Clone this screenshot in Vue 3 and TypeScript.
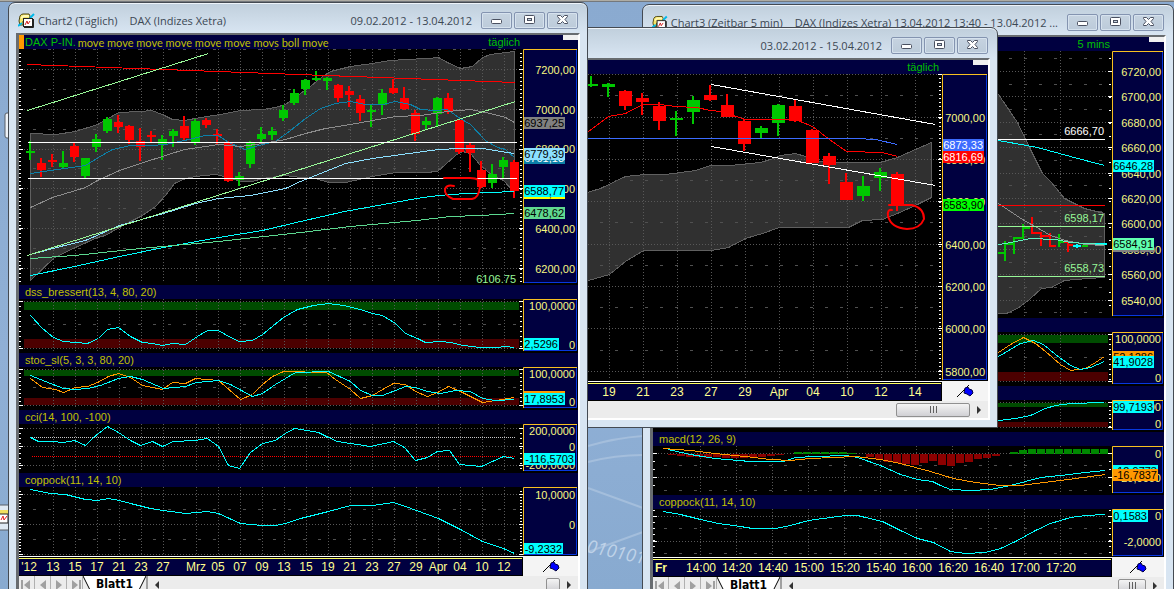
<script setup lang="ts">
type Point = [number, number]
// body top, body bottom, high, low, rising (1) or falling (0)
type Candle = [number, number, number, number, 0 | 1]

interface Line { color: string; pts: string }
interface Band { y: number; h: number; color: string }
interface Label { y: number; text: string }
interface Tag { y: number; text: string; bg: string; fg: string }
interface Note { x: number; y: number; text: string; color: string }
interface Rect { x: number; y: number; w: number; h: number; color: string }
interface Pane {
  title: string
  top: number
  height: number
  axisHeight: number
  dotted: number[]
  dashed: number[]
  tickStep: number
  bands?: Band[]
  area?: string
  lines: Line[]
  candles?: { x: number; step: number; width: number; data: Candle[] }
  rects?: Rect[]
  levels?: { y: number; color: string }[]
  notes?: Note[]
  scribble?: string
  labels: Label[]
  tags: Tag[]
}
interface Tick { x: number; text: string }
interface ChartWindow {
  id: string
  caption: string
  instrument: string
  period: string
  interval: string
  system: string
  studies: string
  left: number
  right: number
  axis: number
  gridStart: number
  gridEnd: number
  grid: number[]
  ticks: Tick[]
  panes: Pane[]
  sheet: string
}

const RED = '#ff0000'
const GREEN = '#00c800'
const CYAN = '#00ffff'
const ORANGE = '#ff9800'
const BAND_HI = '#004c00'
const BAND_LO = '#4c0000'
const PALE = '#98f898'

const ramp = (start: number, step: number, names: string[]): Tick[] =>
  names.map((text, i) => ({ x: start + i * step, text }))

const dailyTicks: Tick[] = [
  { x: 29, text: "'12" },
  ...ramp(53, 22, ['13', '15', '17', '21', '23', '27']),
  ...ramp(196, 22, ['Mrz', '05', '07', '09', '13', '15', '19', '21', '23', '27', '29', 'Apr', '04', '10', '12']),
]
const frontTicks = ramp(609, 34, ['19', '21', '23', '27', '29', 'Apr', '04', '10', '12', '14'])
const minuteTicks = ramp(701, 36, ['14:00', '14:20', '14:40', '15:00', '15:20', '15:40', '16:00', '16:20', '16:40', '17:00', '17:20'])

const histogram = (values: number[]): Rect[] =>
  values
    .map((v, k) => ({ x: 659 + 9 * k, y: v > 0 ? 454 - v : 454, w: 8, h: Math.abs(v), color: v > 0 ? '#008800' : '#8c0000' }))
    .filter((r) => r.h > 0)

const daily: ChartWindow = {
  id: 'daily',
  caption: 'Chart2 (Täglich)',
  instrument: 'DAX (Indizes Xetra)',
  period: '09.02.2012 - 13.04.2012',
  interval: 'täglich',
  system: 'DAX P-IN.',
  studies: 'move move move move move move movs boll move',
  left: 19, right: 578, axis: 523, gridStart: 24, gridEnd: 519,
  grid: dailyTicks.slice(1).map((t) => t.x),
  ticks: dailyTicks,
  sheet: 'Blatt1',
  panes: [
    {
      title: '', top: 49, height: 236, axisHeight: 234, tickStep: 4,
      dotted: [69, 109, 149, 188, 228, 268], dashed: [49, 89, 129, 168, 208, 248],
      area: '30,133 55,134 75,131 97,124 108,118 118,112 140,111 151,110 162,114 172,119 184,120 200,117 220,114 240,110 262,109 275,107 285,104 300,93 310,86 322,76 330,71 350,66 372,63 390,60 405,59 427,58 438,57 447,62 460,68 472,66 482,57 490,54 514,51 514,192 503,180 492,175 480,165 470,153 462,151 455,155 445,164 437,171 425,172 395,172 372,176 345,182 328,182 315,178 300,177 285,175 262,178 252,181 240,181 228,177 215,174 195,176 185,178 174,183 165,195 155,206 142,215 130,221 119,227 105,235 97,237 75,247 54,257 30,280',
      lines: [
        { color: '#0c80a8', pts: '30,173 50,170 85,165 98,157 112,149 130,145 150,145 165,144 184,140 205,135 218,135 228,142 245,149 262,144 275,141 290,130 305,118 320,108 335,103 350,101 365,104 382,104 395,101 410,104 420,109 435,110 447,109 458,117 470,124 485,140 497,147 505,149 514,157' },
        { color: '#8c8c8c', pts: '30,207 52,197 85,187 97,180 119,170 140,163 165,155 184,149 205,146 218,144 240,146 262,143 285,139 305,133 325,128 350,124 372,120 395,116 420,115 447,111 470,109 490,113 505,117 514,122' },
        { color: '#8ce0ff', pts: '30,254 60,246 85,240 119,225 163,213 195,203 218,198 250,195 285,188 300,181 325,171 345,163 372,158 394,155 416,152 438,149 460,148 482,148 500,151 514,153' },
        { color: CYAN, pts: '30,275 74,266 119,256 163,247 218,237 262,230 300,221 344,211 372,206 416,198 438,195 465,193 490,192 514,191' },
        { color: '#5cd890', pts: '30,258 74,255 140,248 218,241 300,232 350,226 416,220 450,216 480,215 514,213' },
        { color: RED, pts: '27,64 515,82' },
        { color: PALE, pts: '27,110 208,53' },
        { color: PALE, pts: '27,255 515,101' },
        { color: '#ffffff', pts: '27,142 516,142' },
        { color: '#ffffff', pts: '27,178 516,178' },
      ],
      candles: {
        x: 30, step: 11, width: 9,
        data: [
          [151, 153, 141, 160, 1], [163, 170, 158, 177, 0], [160, 162, 154, 167, 0], [163, 167, 151, 168, 1],
          [146, 157, 143, 162, 0], [158, 176, 158, 178, 1], [139, 147, 134, 152, 1], [119, 131, 117, 133, 1],
          [122, 127, 115, 133, 0], [126, 140, 125, 144, 0], [141, 147, 128, 161, 0], [135, 137, 131, 143, 0],
          [139, 145, 135, 160, 1], [131, 136, 129, 147, 1], [126, 138, 116, 141, 0], [121, 143, 119, 145, 1],
          [120, 125, 118, 128, 0], [134, 136, 129, 145, 0], [143, 181, 141, 182, 0], [176, 180, 172, 186, 1],
          [143, 164, 141, 168, 1], [134, 139, 127, 144, 1], [131, 135, 127, 140, 1], [110, 118, 105, 121, 1],
          [93, 103, 89, 105, 1], [80, 89, 79, 95, 1], [78, 80, 71, 81, 1], [78, 81, 77, 90, 1],
          [85, 98, 84, 102, 0], [91, 95, 86, 107, 0], [99, 113, 95, 121, 0], [110, 112, 105, 127, 1],
          [93, 105, 89, 115, 1], [88, 93, 79, 94, 0], [98, 109, 87, 110, 0], [113, 134, 110, 141, 0],
          [121, 125, 117, 129, 1], [98, 114, 97, 126, 1], [98, 112, 93, 114, 0], [120, 152, 119, 154, 0],
          [145, 153, 143, 172, 0], [170, 187, 161, 188, 0], [174, 183, 164, 188, 1], [160, 167, 157, 178, 1],
          [162, 191, 160, 198, 0],
        ],
      },
      notes: [{ x: 516, y: 283, text: '6106.75', color: PALE }],
      scribble: 'M444 178 H470 Q481 178 480 186 Q479 198 472 199 H453 Q444 195 445 189 Q447 184 454 186',
      labels: [
        { y: 70, text: '7200,00' }, { y: 110, text: '7000,00' }, { y: 149, text: '6800,00' },
        { y: 189, text: '6600,00' }, { y: 229, text: '6400,00' }, { y: 269, text: '6200,00' },
      ],
      tags: [
        { y: 123, text: '6937,25', bg: '#808080', fg: '#000' },
        { y: 158, text: '6761,13', bg: '#0c80a8', fg: '#fff' },
        { y: 154, text: '6779,39', bg: '#8ce0ff', fg: '#000' },
        { y: 193, text: '6583,90', bg: '#ffff00', fg: '#000' },
        { y: 191, text: '6588,77', bg: CYAN, fg: '#000' },
        { y: 213, text: '6478,62', bg: '#60d890', fg: '#000' },
      ],
    },
    {
      title: 'dss_bressert(13, 4, 80, 20)', top: 299, height: 54, axisHeight: 52, tickStep: 5,
      dotted: [301, 348], dashed: [324],
      bands: [{ y: 302, h: 8, color: BAND_HI }, { y: 339, h: 9, color: BAND_LO }],
      lines: [{ color: CYAN, pts: '30,315 42,328 53,337 63,341 75,342 87,343 98,338 107,329 118,327 130,336 142,342 152,343 162,345 172,343 185,344 197,336 207,330 218,330 230,337 239,341 252,340 262,334 283,317 297,309 313,305 328,303 343,305 360,309 372,313 382,315 395,323 405,333 417,338 425,342 440,341 450,342 463,345 480,347 497,347 504,346 514,347' }],
      labels: [{ y: 306, text: '100,0000' }, { y: 345, text: '0' }],
      tags: [{ y: 344, text: '2,5296', bg: CYAN, fg: '#000' }],
    },
    {
      title: 'stoc_sl(5, 3, 3, 80, 20)', top: 367, height: 43, axisHeight: 41, tickStep: 4,
      dotted: [369, 405], dashed: [387],
      bands: [{ y: 370, h: 6, color: BAND_HI }, { y: 398, h: 7, color: BAND_LO }],
      lines: [
        { color: ORANGE, pts: '30,378 42,387 55,389 63,392 75,387 87,386 97,382 108,376 118,373 130,377 142,385 162,389 172,382 185,383 195,378 218,380 240,399 252,394 262,384 272,376 283,371 326,372 335,379 350,389 360,398 372,395 382,389 393,383 405,384 415,391 427,396 437,392 448,386 460,391 482,402 495,400 514,397' },
        { color: CYAN, pts: '30,375 45,381 63,388 75,389 87,388 100,385 118,378 130,376 142,379 163,388 185,386 196,382 218,380 230,384 252,396 262,393 275,384 285,378 295,372 328,371 350,381 360,390 372,395 382,395 395,390 405,386 415,387 427,391 440,393 455,390 470,391 482,398 495,400 514,399' },
      ],
      labels: [{ y: 374, text: '100,0000' }, { y: 402, text: '0' }],
      tags: [
        { y: 397, text: '19,7861', bg: ORANGE, fg: '#000' },
        { y: 399, text: '17,8953', bg: CYAN, fg: '#000' },
      ],
    },
    {
      title: 'cci(14, 100, -100)', top: 424, height: 49, axisHeight: 47, tickStep: 5,
      dotted: [428, 446, 465], dashed: [],
      levels: [{ y: 437, color: '#c8c8c8' }, { y: 456, color: RED }],
      lines: [{ color: CYAN, pts: '30,437 38,441 52,441 63,442 74,440 85,445 93,437 107,426 118,432 130,440 140,445 152,441 162,446 173,441 195,440 207,438 218,446 228,465 239,468 250,452 262,443 275,440 285,433 294,428 307,430 318,432 328,437 337,441 350,443 370,446 393,441 404,447 415,460 427,457 437,451 449,450 459,464 481,466 492,461 503,456 514,458' }],
      labels: [{ y: 431, text: '200,0000' }, { y: 447, text: '0' }, { y: 465, text: '-200,0000' }],
      tags: [{ y: 459, text: '-116,5703', bg: CYAN, fg: '#000' }],
    },
    {
      title: 'coppock(11, 14, 10)', top: 487, height: 69, axisHeight: 68, tickStep: 3,
      dotted: [494, 524, 554], dashed: [509, 539],
      lines: [{ color: CYAN, pts: '30,489 50,493 65,494 85,499 97,500 108,498 119,500 130,503 150,508 163,510 185,513 207,511 218,513 240,523 262,525 275,525 285,523 300,518 328,511 350,505 372,505 393,502 405,506 416,510 438,518 460,529 482,541 503,548 514,553' }],
      labels: [{ y: 495, text: '10,0000' }, { y: 525, text: '0' }],
      tags: [{ y: 549, text: '-9,2332', bg: CYAN, fg: '#000' }],
    },
  ],
}

const minutes: ChartWindow = {
  id: 'minutes',
  caption: 'Chart3 (Zeitbar 5 min)',
  instrument: 'DAX (Indizes Xetra) 13.04.2012 13:40 - 13.04.2012 ...',
  period: '',
  interval: '5 mins',
  system: '',
  studies: '',
  left: 653, right: 1164, axis: 1112, gridStart: 655, gridEnd: 1108,
  grid: minuteTicks.map((t) => t.x - 1),
  ticks: minuteTicks,
  sheet: 'Blatt1',
  panes: [
    {
      title: '', top: 51, height: 267, axisHeight: 265, tickStep: 13,
      dotted: [71, 96, 122, 147, 173, 198, 223, 249, 274, 300], dashed: [58, 84, 109, 134, 160, 185, 211, 236, 262, 287, 312],
      area: '960,60 998,94 1017,122 1029,147 1042,173 1051,182 1064,198 1084,208 1104,213 1104,277 1087,278 1064,280 1051,287 1041,288 1029,299 1017,308 1006,313 998,313 960,300',
      lines: [
        { color: '#8c8c8c', pts: '990,198 998,203 1022,219 1040,229 1050,235 1065,240 1085,244 1104,245' },
        { color: CYAN, pts: '990,138 998,140 1037,147 1070,156 1104,165' },
        { color: '#ffffff', pts: '990,139 1104,139' },
        { color: RED, pts: '990,205 1104,205' },
        { color: PALE, pts: '990,226 1104,226' },
        { color: PALE, pts: '990,276 1104,276' },
        { color: '#60f0c0', pts: '990,245 1005,243 1020,240 1030,238 1055,239 1070,242 1104,244' },
      ],
      rects: [
        { x: 998, y: 252, w: 6, h: 2, color: GREEN }, { x: 1004, y: 241, w: 2, h: 20, color: GREEN },
        { x: 1006, y: 243, w: 8, h: 2, color: GREEN }, { x: 1013, y: 237, w: 2, h: 17, color: GREEN },
        { x: 1014, y: 237, w: 9, h: 2, color: GREEN }, { x: 1022, y: 224, w: 2, h: 15, color: GREEN },
        { x: 1023, y: 227, w: 7, h: 2, color: GREEN }, { x: 1031, y: 217, w: 2, h: 17, color: RED },
        { x: 1031, y: 232, w: 9, h: 2, color: RED }, { x: 1040, y: 232, w: 2, h: 14, color: RED },
        { x: 1041, y: 235, w: 9, h: 2, color: RED }, { x: 1049, y: 233, w: 2, h: 14, color: RED },
        { x: 1050, y: 245, w: 6, h: 2, color: RED }, { x: 1058, y: 234, w: 2, h: 13, color: GREEN },
        { x: 1059, y: 241, w: 5, h: 2, color: GREEN }, { x: 1064, y: 241, w: 4, h: 2, color: RED },
        { x: 1067, y: 242, w: 2, h: 10, color: RED }, { x: 1069, y: 244, w: 4, h: 2, color: RED },
        { x: 1073, y: 245, w: 8, h: 2, color: CYAN }, { x: 1076, y: 244, w: 2, h: 4, color: CYAN },
        { x: 1082, y: 245, w: 6, h: 2, color: GREEN }, { x: 1091, y: 243, w: 16, h: 2, color: CYAN },
      ],
      notes: [
        { x: 1104, y: 135, text: '6666,70', color: '#fff' },
        { x: 1104, y: 222, text: '6598,17', color: PALE },
        { x: 1104, y: 272, text: '6558,73', color: PALE },
      ],
      labels: [
        { y: 72, text: '6720,00' }, { y: 97, text: '6700,00' }, { y: 123, text: '6680,00' }, { y: 148, text: '6660,00' },
        { y: 174, text: '6640,00' }, { y: 199, text: '6620,00' }, { y: 224, text: '6600,00' }, { y: 250, text: '6580,00' },
        { y: 275, text: '6560,00' }, { y: 301, text: '6540,00' },
      ],
      tags: [
        { y: 166, text: '6646,28', bg: CYAN, fg: '#000' },
        { y: 246, text: '6583,14', bg: '#808080', fg: '#000' },
        { y: 244, text: '6584,91', bg: '#60ffb0', fg: '#000' },
      ],
    },
    {
      title: '', top: 332, height: 54, axisHeight: 52, tickStep: 5,
      dotted: [334, 381], dashed: [357],
      bands: [{ y: 335, h: 8, color: BAND_HI }, { y: 372, h: 9, color: BAND_LO }],
      lines: [
        { color: ORANGE, pts: '998,352 1010,344 1023,337 1035,343 1045,351 1060,364 1070,370 1085,368 1095,362 1104,356' },
        { color: CYAN, pts: '998,356 1010,349 1020,343 1033,340 1043,344 1055,354 1070,365 1080,369 1090,367 1104,361' },
      ],
      labels: [{ y: 339, text: '100,0000' }, { y: 378, text: '0' }],
      tags: [
        { y: 357, text: '52,1286', bg: ORANGE, fg: '#000' },
        { y: 362, text: '41,9028', bg: CYAN, fg: '#000' },
      ],
    },
    {
      title: '', top: 400, height: 32, axisHeight: 30, tickStep: 4,
      dotted: [402, 427], dashed: [],
      bands: [{ y: 403, h: 4, color: BAND_HI }, { y: 422, h: 5, color: BAND_LO }],
      lines: [{ color: CYAN, pts: '998,420 1015,418 1030,415 1045,408 1055,405 1070,403 1104,402' }],
      labels: [{ y: 407, text: '100,0000' }, { y: 424, text: '0' }],
      tags: [{ y: 407, text: '99,7193', bg: CYAN, fg: '#000' }],
    },
    {
      title: 'macd(12, 26, 9)', top: 446, height: 49, axisHeight: 47, tickStep: 8,
      dotted: [453, 477], dashed: [465, 490],
      rects: histogram([0, -1, -2, -3, -3, -4, -3, -4, -4, -4, -3, -3, -2, -1, 0, 2, 2, 2, 2, 2, 2, 1, 0, -3, -5, -8, -9, -10, -11, -9, -7, -11, -12, -9, -8, -5, -4, -2, 0, 2, 4, 5, 5, 5, 5, 5, 5, 5, 5, 5]),
      lines: [
        { color: CYAN, pts: '668,449 672,450 690,454 714,458 750,461 783,461 795,457 815,456 845,455 857,457 880,465 900,474 917,479 932,481 940,485 950,489 970,490 990,489 1010,485 1025,481 1040,477 1060,475 1085,472 1105,470' },
        { color: ORANGE, pts: '663,448 690,450 714,453 745,456 770,459 790,460 810,458 855,456 880,459 900,463 930,471 953,478 975,482 1000,485 1020,485 1060,480 1105,474' },
      ],
      labels: [{ y: 454, text: '0' }, { y: 478, text: '-20,0000' }],
      tags: [
        { y: 471, text: '-12,9773', bg: CYAN, fg: '#000' },
        { y: 475, text: '-16,7837', bg: ORANGE, fg: '#000' },
      ],
    },
    {
      title: 'coppock(11, 14, 10)', top: 509, height: 48, axisHeight: 47, tickStep: 6,
      dotted: [516, 541], dashed: [528, 553],
      lines: [{ color: CYAN, pts: '663,511 680,514 700,519 718,523 740,526 752,528 775,528 790,525 808,520 830,517 845,515 857,515 865,517 882,521 900,530 917,538 933,542 950,551 965,553 985,552 1000,548 1015,541 1035,530 1050,523 1070,517 1085,515 1105,514' }],
      labels: [{ y: 516, text: '0' }, { y: 542, text: '-2,0000' }],
      tags: [{ y: 516, text: '0,1583', bg: CYAN, fg: '#000' }],
    },
  ],
}

const front: ChartWindow = {
  id: 'front',
  caption: '',
  instrument: '',
  period: '03.02.2012 - 15.04.2012',
  interval: 'täglich',
  system: '',
  studies: '',
  left: 571, right: 988, axis: 942, gridStart: 576, gridEnd: 939,
  grid: frontTicks.map((t) => t.x),
  ticks: frontTicks,
  sheet: '',
  panes: [
    {
      title: '', top: 74, height: 307, axisHeight: 306, tickStep: 4,
      dotted: [74, 117, 159, 201, 244, 286, 328, 371], dashed: [95, 138, 180, 222, 265, 307, 350],
      area: '580,194 600,188 625,176 645,174 665,174 695,170 710,165 730,165 760,162 770,159 780,155 795,153 805,156 813,160 830,162 880,162 897,157 915,149 931,142 931,197 917,204 897,213 882,219 862,220 848,227 779,227 762,233 745,238 728,247 711,250 643,250 625,261 609,274 588,280 580,282',
      lines: [
        { color: RED, pts: '580,136 588,131 608,116 625,113 642,104 660,104 675,106 696,107 710,110 720,111 745,119 795,119 812,126 829,139 846,151 882,152 897,156' },
        { color: '#3c6cff', pts: '580,138 855,138 875,139 897,144' },
        { color: '#ffffff', pts: '711,84 935,124' },
        { color: '#ffffff', pts: '711,146 935,185' },
      ],
      candles: {
        x: 591, step: 17, width: 13,
        data: [
          [84, 86, 76, 87, 1], [84, 87, 83, 97, 1], [91, 106, 90, 110, 0], [98, 102, 93, 115, 0],
          [106, 121, 102, 130, 0], [118, 120, 111, 136, 1], [100, 112, 96, 124, 1], [95, 100, 85, 101, 0],
          [105, 117, 94, 117, 0], [121, 144, 119, 151, 0], [128, 133, 126, 138, 1], [105, 123, 104, 136, 1],
          [106, 121, 100, 122, 0], [130, 163, 129, 163, 0], [156, 165, 153, 184, 0], [182, 200, 173, 200, 0],
          [186, 196, 176, 201, 1], [172, 178, 168, 191, 1], [174, 205, 172, 211, 0],
        ],
      },
      scribble: 'M889 205 H912 Q924 208 924 219 Q920 229 907 229 Q891 228 888 216 Q887 209 892 210',
      labels: [
        { y: 118, text: '7000,00' }, { y: 160, text: '6800,00' }, { y: 202, text: '6600,00' }, { y: 245, text: '6400,00' },
        { y: 287, text: '6200,00' }, { y: 329, text: '6000,00' }, { y: 372, text: '5800,00' },
      ],
      tags: [
        { y: 145, text: '6873,33', bg: '#3c6cff', fg: '#fff' },
        { y: 157, text: '6816,69', bg: RED, fg: '#fff' },
        { y: 205, text: '6583,90', bg: '#00ff00', fg: '#000' },
      ],
    },
  ],
}

const windows: ChartWindow[] = [minutes, front, daily]

const tickYs = (p: Pane): number[] => {
  const out: number[] = []
  for (let y = p.dotted[0] % p.tickStep + Math.ceil(p.top / p.tickStep) * p.tickStep; y < p.top + p.axisHeight; y += p.tickStep) out.push(y)
  return out
}

const tagWidth = (text: string): number =>
  [...text].reduce((sum, c) => sum + (c === ',' ? 3 : c === '-' ? 4 : 6), 2)

const points = (s: string): Point[] => s.split(' ').map((p) => p.split(',').map(Number) as Point)
const shifted = (s: string): string => points(s).map(([x, y]) => `${x + 0.5},${y + 0.5}`).join(' ')
</script>

<template>
  <main class="desktop">
    <svg class="wallpaper" width="1174" height="589" aria-hidden="true">
      <g fill="none" stroke="#a4bedc" stroke-width="2">
        <path d="M588 446 Q615 438 643 436" />
        <path d="M588 462 Q615 455 643 455" />
        <path d="M588 488 L643 508" />
        <path d="M588 552 L643 532" />
      </g>
      <text class="digits" x="586" y="552" transform="rotate(12 586 552)">010101</text>
      <rect x="0" y="0" width="1174" height="1" fill="#aeaca4" />
      <rect x="0" y="1" width="1174" height="1" fill="#74787c" />
      <rect x="5" y="113" width="8" height="25" rx="2" fill="#eef3f8" stroke="#5a6068" />
      <rect x="-3" y="505" width="14" height="25" fill="#dfe9f3" stroke="#5a6068" />
      <rect x="0" y="510" width="8" height="5" fill="#f0e060" />
      <rect x="-1" y="514" width="9" height="9" fill="#fff" stroke="#222" />
      <path d="M1 520 L3 516 L4 520 L7 516" fill="none" stroke="#e02020" />
    </svg>

    <section v-for="w in windows" :key="w.id" class="window" :class="w.id" :aria-label="w.caption || w.period">
      <header class="titlebar">
        <svg v-if="w.caption" class="app-icon" width="17" height="15" viewBox="0 0 17 15" aria-hidden="true">
          <path d="M1 8 L2 3 Q3 1 5 1 H11 L12 3 L11 8 H5 V12 H2 Z" fill="#f4e468" stroke="#4c4410" />
          <path d="M3 5 L6 3 L11 3" fill="none" stroke="#fff8b8" stroke-width="2" />
          <path d="M0 13 L4 10 M12 5 L16 1" stroke="#00b8e8" stroke-width="2" />
          <rect x="5.500" y="5.500" width="9" height="8" fill="#fff" stroke="#222" />
          <path d="M15.500 6 V14.500 H6" fill="none" stroke="#222" />
          <path d="M7 12 L9 8 L10 11 L12 8" fill="none" stroke="#d02020" />
        </svg>
        <h2 v-if="w.caption" class="caption">{{ w.caption }}</h2>
        <span class="instrument">{{ w.instrument }}</span>
        <span class="period">{{ w.period }}</span>
        <div class="controls">
          <button type="button" aria-label="Minimieren">
            <svg width="12" height="10" viewBox="0 0 12 10"><rect x="0.500" y="4.500" width="10" height="4" rx="1" fill="#fff" stroke="#4a5060" /></svg>
          </button>
          <button type="button" aria-label="Maximieren">
            <svg width="12" height="10" viewBox="0 0 12 10"><rect x="0.500" y="0.500" width="10" height="8" rx="1" fill="#fff" stroke="#4a5060" /><rect x="3.500" y="3.500" width="4" height="2" fill="#c8d4e0" stroke="#4a5060" /></svg>
          </button>
          <button type="button" aria-label="Schließen">
            <svg width="12" height="10" viewBox="0 0 12 10"><path d="M0.500 0.500 H3.500 L5.500 2.500 L7.500 0.500 H10.500 V1.500 L8 4.500 L10.500 7.500 V8.500 H7.500 L5.500 6.500 L3.500 8.500 H0.500 V7.500 L3 4.500 L0.500 1.500 Z" fill="#fff" stroke="#4a5060" /></svg>
          </button>
        </div>
      </header>

      <div class="body">
        <article v-for="(p, i) in w.panes" :key="p.top" class="pane">
          <div class="strip">
            <template v-if="i === 0">
              <i v-if="w.system" class="marker"></i>
              <span class="system">{{ w.system }}</span>
              <span class="studies">{{ w.studies }}</span>
              <span class="interval">{{ w.interval }}</span>
              <i class="handle"></i>
            </template>
            <span v-else class="study">{{ p.title }}</span>
          </div>
          <div class="row">
            <svg :width="w.axis - w.left" :height="p.height" :viewBox="`${w.left} ${p.top} ${w.axis - w.left} ${p.height}`" class="plot">
              <polygon v-if="p.area" :points="shifted(p.area)" fill="#303030" stroke="#606060" />
              <rect v-for="b in p.bands" :key="b.y" :x="w.gridStart" :y="b.y" :width="w.gridEnd - w.gridStart" :height="b.h" :fill="b.color" />
              <g stroke="#585858" stroke-dasharray="1 2">
                <line v-for="x in w.grid" :key="x" :x1="x + 0.5" :x2="x + 0.5" :y1="p.top" :y2="p.top + p.axisHeight" />
                <line v-for="y in p.dotted" :key="y" :x1="w.gridStart" :x2="w.gridEnd" :y1="y + 0.5" :y2="y + 0.5" />
              </g>
              <g stroke="#505050" stroke-dasharray="3 12">
                <line v-for="y in p.dashed" :key="y" :x1="w.gridStart + 9" :x2="w.gridEnd" :y1="y + 0.5" :y2="y + 0.5" />
              </g>
              <line v-for="l in p.levels" :key="l.y" :x1="w.left + 13" :x2="w.gridEnd - 3" :y1="l.y + 0.5" :y2="l.y + 0.5" :stroke="l.color" stroke-dasharray="1 1" />
              <rect v-for="(r, k) in p.rects" :key="k" :x="r.x" :y="r.y" :width="r.w" :height="r.h" :fill="r.color" />
              <g v-if="p.candles">
                <g v-for="(c, k) in p.candles.data" :key="k" :fill="c[4] ? GREEN : RED">
                  <rect :x="p.candles.x + k * p.candles.step - 1" :y="c[2]" width="2" :height="c[3] - c[2]" />
                  <rect :x="p.candles.x + k * p.candles.step - (p.candles.width - 1) / 2" :y="c[0]" :width="p.candles.width" :height="c[1] - c[0]" />
                </g>
              </g>
              <polyline v-for="(l, k) in p.lines" :key="k" :points="shifted(l.pts)" :stroke="l.color" fill="none" />
              <path v-if="p.scribble" :d="p.scribble" class="scribble" />
              <g fill="#ffffff">
                <rect v-for="y in tickYs(p)" :key="y" :x="w.axis - 3" :y="y" width="2" height="1" />
                <rect v-for="y in p.dotted" :key="y" :x="w.axis - 4" :y="y" width="4" height="1" />
                <rect v-for="y in tickYs(p)" :key="y" :x="w.left" :y="y" width="2" height="1" />
                <rect v-for="y in p.dotted" :key="y" :x="w.left" :y="y" width="4" height="1" />
              </g>
              <text v-for="n in p.notes" :key="n.text" :x="n.x" :y="n.y" class="number" :fill="n.color">{{ n.text }}</text>
            </svg>
            <svg :width="w.right - w.axis" :height="p.height" :viewBox="`${w.axis} ${p.top} ${w.right - w.axis} ${p.height}`" class="scale">
              <rect :x="w.axis" :y="p.top" :width="w.right - w.axis - 1" :height="p.axisHeight" fill="#000040" />
              <text v-for="l in p.labels" :key="l.text" :x="w.right - 3" :y="l.y + 4" class="number" fill="#f8f880">{{ l.text }}</text>
              <g v-for="t in p.tags" :key="t.text">
                <rect :x="w.axis + 1" :y="t.y - 6" :width="tagWidth(t.text)" height="12" :fill="t.bg" />
                <text :x="w.axis + tagWidth(t.text)" :y="t.y + 4" class="number" :fill="t.fg">{{ t.text }}</text>
              </g>
              <path :d="`M${w.right - 1.5} ${p.top + 1} V${p.top + p.axisHeight - 0.5} H${w.axis}`" fill="none" stroke="#0838e0" />
              <path :d="`M${w.axis + 0.5} ${p.top + p.axisHeight} V${p.top + 0.5} H${w.right - 1}`" fill="none" stroke="#f8c020" />
            </svg>
          </div>
        </article>

        <div class="row time">
          <svg :width="w.axis - w.left" height="20" :viewBox="`${w.left} 0 ${w.axis - w.left} 20`" class="plot">
            <rect :x="w.left" y="0" :width="w.axis - w.left" height="1" fill="#fff" />
            <rect :x="w.left" y="2" :width="w.axis - w.left - 1" height="1" fill="#ffff60" />
            <rect :x="w.left" y="3" :width="w.axis - w.left - 1" height="16" fill="#000040" />
            <text v-if="w.id === 'minutes'" :x="w.left + 2" y="15" class="day">Fr</text>
            <text v-for="t in w.ticks" :key="t.x" :x="t.x" y="15" class="tick">{{ t.text }}</text>
          </svg>
          <div class="corner">
            <svg width="18" height="14" viewBox="0 0 18 14" aria-hidden="true">
              <path d="M1 13 L13 1" stroke="#000" fill="none" />
              <path d="M9 4 L12 3 L13 5 L16 6 L17 9 L14 12 L11 10 L8 9 Z" fill="#0000ff" stroke="#000040" />
            </svg>
          </div>
        </div>

        <footer class="sheets">
          <template v-if="w.sheet">
            <button v-for="n in 4" :key="n" type="button" class="nav" :aria-label="`Blattnavigation ${n}`">
              <svg width="12" height="12" viewBox="0 0 12 12">
                <path :d="n < 3 ? 'M9 1 V11 L3 6 Z' : 'M3 1 V11 L9 6 Z'" fill="#a0a0a0" />
                <rect v-if="n === 1" x="0" y="1" width="2" height="10" fill="#a0a0a0" />
                <rect v-if="n === 4" x="10" y="1" width="2" height="10" fill="#a0a0a0" />
              </svg>
            </button>
            <button type="button" class="tab">
              <svg class="edge" width="8" height="16" viewBox="0 0 8 16" aria-hidden="true"><path d="M0 0 L8 16 V0 Z" fill="#fff" /><path d="M0 0 L8 16" stroke="#000" /></svg>
              <span>{{ w.sheet }}</span>
              <svg class="edge" width="8" height="16" viewBox="0 0 8 16" aria-hidden="true"><path d="M8 0 L0 16 V0 Z" fill="#fff" /><path d="M8 0 L0 16" stroke="#000" /></svg>
            </button>
          </template>
          <div class="scroll">
            <button type="button" class="arrow" aria-label="Nach links">
              <svg width="4" height="8" viewBox="0 0 4 8"><path d="M4 0 V8 L0 4 Z" fill="#333" /></svg>
            </button>
            <div class="track"><button type="button" class="thumb" aria-label="Bildlauf"><i></i><i></i><i></i></button></div>
            <button type="button" class="arrow" aria-label="Nach rechts">
              <svg width="4" height="8" viewBox="0 0 4 8"><path d="M0 0 V8 L4 4 Z" fill="#333" /></svg>
            </button>
          </div>
        </footer>
      </div>
    </section>
  </main>
</template>

<style>
body {
  margin: 0;
}
</style>

<style scoped>
.desktop {
  position: relative;
  height: 100vh;
  overflow: hidden;
  background: linear-gradient(#8aaad0, #90b0d6 60%, #88aad0);
  font-family: "Liberation Sans", Arial, sans-serif;
  font-size: 12px;
}
.wallpaper {
  position: absolute;
  top: 0;
  left: 0;
}
.digits {
  font: italic 18px "Open Sans", sans-serif;
  fill: #bed2e8;
}
button {
  padding: 0;
  border: 0;
  background: none;
  font: inherit;
}
svg {
  display: block;
}
.window {
  position: absolute;
  box-sizing: border-box;
  padding: 0 7px 7px;
  border: 1px solid #444a52;
  border-radius: 7px 7px 0 0;
  background: linear-gradient(#c0cfdc, #d8e5f2 30px);
  box-shadow: inset 0 1px 0 #eef4fa;
}
.daily {
  top: 2px;
  left: 8px;
  width: 580px;
}
.minutes {
  top: 4px;
  left: 642px;
  width: 532px;
}
.front {
  top: 27px;
  left: 560px;
  width: 438px;
}
.titlebar {
  display: flex;
  align-items: center;
  height: 30px;
  padding: 4px 0 0 2px;
  box-sizing: border-box;
  font: 11px "Open Sans", sans-serif;
  color: #3c4854;
  white-space: nowrap;
}
.caption {
  margin: 0 12px 0 3px;
  font: inherit;
}
.period {
  margin-left: auto;
}
.controls {
  display: flex;
  gap: 2px;
  margin: 0 2px 0 9px;
}
.controls button {
  display: flex;
  align-items: center;
  justify-content: center;
  width: 31px;
  height: 17px;
  border: 1px solid #8494b0;
  border-radius: 2px;
  background: linear-gradient(#c6d3e0, #bccbda);
  box-shadow: inset 0 0 0 1px #d6e2ee;
}
.body {
  border-style: solid;
  border-width: 2px 2px 2px 3px;
  border-color: #686c70 #fff #fff #686c70;
  background: #000;
}
.strip {
  display: flex;
  align-items: center;
  height: 14px;
  background: #000040;
  color: #c0c000;
  font-size: 11px;
  white-space: nowrap;
}
.marker {
  width: 5px;
  height: 14px;
  margin-right: 1px;
  background: #ff9800;
}
.system,
.interval {
  color: #00c000;
}
.studies {
  margin-left: 2px;
  font-family: Lato, sans-serif;
}
.study {
  margin-left: 6px;
}
.interval {
  margin-left: auto;
}
.handle {
  align-self: flex-start;
  width: 15px;
  height: 5px;
  margin-left: 43px;
  background: #f0f0f0;
}
.front .handle {
  margin-left: 34px;
}
.minutes .handle {
  margin-left: 39px;
}
.row {
  display: flex;
}
.plot,
.scale {
  flex: none;
}
.plot polyline,
.plot polygon,
.plot line,
.plot rect {
  shape-rendering: crispEdges;
}
.scribble {
  fill: none;
  stroke: #f00;
  stroke-width: 2;
  stroke-linecap: round;
}
.number {
  font: 11px "Liberation Sans", Arial, sans-serif;
  text-anchor: end;
}
.tick {
  font: 12px "Liberation Sans", Arial, sans-serif;
  text-anchor: middle;
  fill: #ffff90;
}
.day {
  font: bold 12px "Liberation Sans", Arial, sans-serif;
  fill: #ffff90;
}
.corner {
  display: flex;
  flex: 1;
  align-items: center;
  justify-content: center;
  background: #f4f4f4;
}
.sheets {
  display: flex;
  height: 17px;
  background: #ececec;
}
.nav {
  display: flex;
  align-items: center;
  justify-content: center;
  width: 16px;
  border-right: 1px solid #b0b0b0;
}
.tab {
  display: flex;
  height: 16px;
  font: bold 12px/16px "DejaVu Sans Condensed", "DejaVu Sans", sans-serif;
}
.tab span {
  padding: 0 5px;
  background: #fff;
}
.scroll {
  display: flex;
  flex: 1;
  align-items: center;
  border-left: 2px solid #a0a0a0;
}
.arrow {
  display: flex;
  align-items: center;
  justify-content: center;
  width: 18px;
  height: 16px;
}
.track {
  display: flex;
  flex: 1;
  justify-content: flex-end;
}
.thumb {
  display: flex;
  align-items: center;
  justify-content: center;
  gap: 2px;
  width: 14px;
  height: 14px;
  border: 1px solid #909090;
  border-radius: 2px;
  background: linear-gradient(#f4f4f4, #d0d0d4);
}
.thumb i {
  width: 1px;
  height: 7px;
  background: #606060;
}
.daily .thumb i {
  display: none;
}
.minutes .thumb {
  width: 28px;
}
.front .thumb {
  width: 74px;
}
</style>
